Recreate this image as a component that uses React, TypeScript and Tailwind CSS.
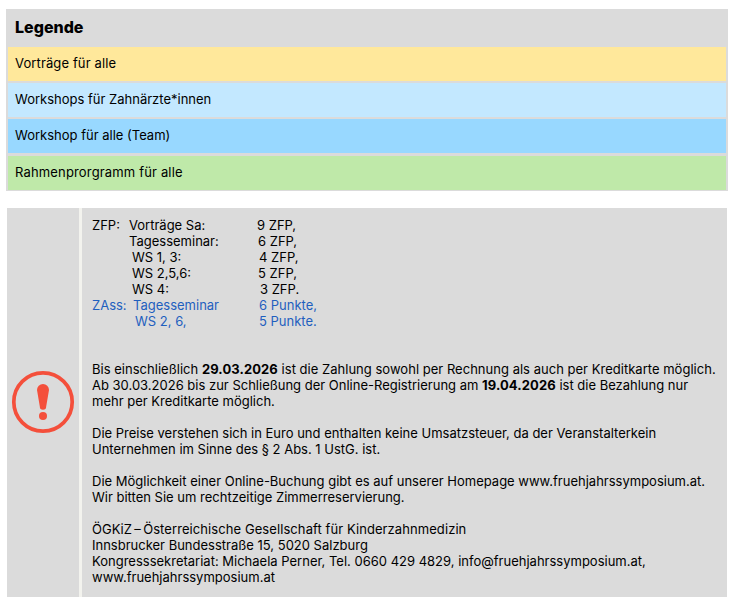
const font = "[font-family:Inter,'Liberation_Sans',sans-serif]";

const rows = [
  ["Vorträge für alle", "bg-[#ffe89b] mb-[2px] tracking-[0.12px]"],
  ["Workshops für Zahnärzte*innen", "bg-[#c3e8ff] mb-[2px]"],
  ["Workshop für alle (Team)", "bg-[#98d8ff] mb-[3px]"],
  ["Rahmenprorgramm für alle", "bg-[#bfe9a9] tracking-[0.16px]"],
];

const credits: [string, string, string, string, boolean][] = [
  ["ZFP:", "pl-0", "Vorträge Sa:", "ml-0", false],
  ["", "pl-0", "Tagesseminar:", "ml-[1px]", false],
  ["", "pl-[3px]", "WS 1, 3:", "ml-[2px]", false],
  ["", "pl-[3px]", "WS 2,5,6:", "ml-[1px]", false],
  ["", "pl-[3px]", "WS 4:", "ml-[3px]", false],
  ["ZAss:", "pl-[4px]", "Tagesseminar", "ml-[2px]", true],
  ["", "pl-[6px]", "WS 2, 6,", "ml-[2px]", true],
];
const values = ["9 ZFP,", "6 ZFP,", "4 ZFP,", "5 ZFP,", "3 ZFP.", "6 Punkte,", "5 Punkte."];

export default function App() {
  return (
    <div className={`w-[735px] h-[601px] bg-white text-black overflow-hidden pt-[9px] pl-[6px] pr-[7px] ${font}`}>
      <section className="bg-[#dbdbdb] h-[182px] px-[2px]">
        <h2 className="h-[38px] pl-[7px] pt-[7px] text-[16px] leading-[22px] font-extrabold text-black">Legende</h2>
        <div className="flex flex-col">
          {rows.map(([t, cls]) => (
            <div key={t} className={`${cls} h-[34px] flex items-center pl-[7px] text-[13px]`}>{t}</div>
          ))}
        </div>
      </section>
      <section className="mt-[17px] ml-[1px] mr-[1px] h-[389px] flex">
        <div className="w-[72px] bg-[#dbdbdb] flex items-start justify-center pt-[162px]">
          <svg width="64" height="64" viewBox="0 0 64 64" fill="none">
            <circle cx="32" cy="32" r="29.2" stroke="#f44f3b" strokeWidth="3.7" />
            <path d="M26 20a6 6 0 0 1 12 0l-2.8 16.5a3.2 3.2 0 0 1-6.4 0Z" fill="#f44f3b" />
            <circle cx="32" cy="46" r="4" fill="#f44f3b" />
          </svg>
        </div>
        <div className="w-[3px] bg-[#f3f3ee]" />
        <div className="flex-1 bg-[#dbdbdb] pl-[10px] pt-[9px] text-[13px] leading-[16px]">
          <div className="mb-[32px]">
            {credits.map(([a, pad, b, cm, blue], i) => (
              <div key={i} className={`flex h-[16px] ${blue ? "text-[#1f5fbf]" : ""}`}>
                <span className="w-[37px]">{a}</span>
                <span className={`w-[128px] ${pad}`}>{b}</span>
                <span className={cm}>{values[i]}</span>
              </div>
            ))}
          </div>
          <p className="mb-[16px]">
            <span className="tracking-[0.02px]">Bis einschließlich <b className="tracking-[0.1px]">29.03.2026</b> ist die Zahlung sowohl per Rechnung als auch per Kreditkarte möglich.</span><br />
            Ab 30.03.2026 bis zur Schließung der Online-Registrierung am <b className="tracking-[0.1px]">19.04.2026</b> ist die Bezahlung nur<br />
            mehr per Kreditkarte möglich.
          </p>
          <p className="mb-[16px]">
            Die Preise verstehen sich in Euro und enthalten keine Umsatzsteuer, da der Veranstalterkein<br />
            Unternehmen im Sinne des § 2 Abs. 1 UstG. ist.
          </p>
          <p className="mb-[16px]">
            Die Möglichkeit einer Online-Buchung gibt es auf unserer Homepage www.fruehjahrssymposium.at.<br />
            Wir bitten Sie um rechtzeitige Zimmerreservierung.
          </p>
          <p>
            ÖGKiZ{"\u2009"}–{"\u2009"}<span className="tracking-[0.08px]">Österreichische Gesellschaft für Kinderzahnmedizin</span><br />
            Innsbrucker Bundesstraße 15, 5020 Salzburg<br />
            Kongresssekretariat: Michaela Perner, Tel. 0660 429 4829, info@fruehjahrssymposium.at,<br />
            www.fruehjahrssymposium.at
          </p>
        </div>
      </section>
    </div>
  );
}
